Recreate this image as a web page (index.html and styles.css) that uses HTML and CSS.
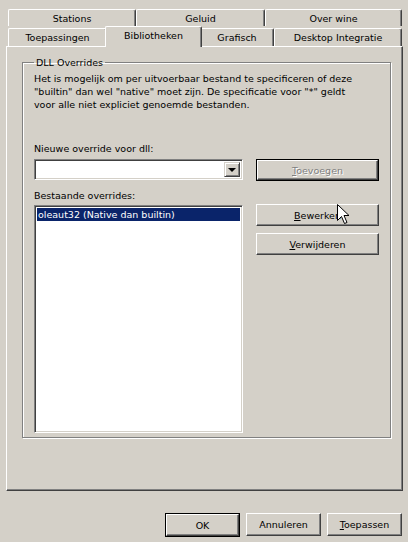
FILE: index.html
```html
<!DOCTYPE html>
<html lang="nl">
<head>
    <meta charset="UTF-8">
    <title>Wine configuratie</title>
    <link rel="stylesheet" href="styles.css">
</head>
<body>
    <div class="dialog">
        <div class="tabs">
            <div class="tab-row tab-row-back">
                <div class="tab w-stations">Stations</div>
                <div class="tab w-geluid">Geluid</div>
                <div class="tab w-wine">Over wine</div>
            </div>
            <div class="tab-row tab-row-front">
                <div class="tab w-toep">Toepassingen</div>
                <div class="tab tab-active w-bib">Bibliotheken</div>
                <div class="tab w-graf">Grafisch</div>
                <div class="tab w-desk">Desktop Integratie</div>
            </div>
        </div>

        <div class="panel">
            <fieldset class="group">
                <legend>DLL Overrides</legend>
                <p class="intro">Het is mogelijk om per uitvoerbaar bestand te specificeren of deze "builtin" dan wel "native" moet zijn. De specificatie voor "*" geldt voor alle niet expliciet genoemde bestanden.</p>

                <div class="overrides">
                    <div class="col-left">
                        <div class="label">Nieuwe override voor dll:</div>
                        <div class="combo">
                            <div class="combo-text"></div>
                            <div class="combo-btn"><span class="arrow"></span></div>
                        </div>
                        <div class="label label-list">Bestaande overrides:</div>
                        <div class="listbox">
                            <div class="list-item selected">oleaut32 (Native dan builtin)</div>
                        </div>
                    </div>
                    <div class="col-right">
                        <button class="btn btn-default btn-disabled"><u>T</u>oevoegen</button>
                        <button class="btn btn-edit"><u>B</u>ewerken</button>
                        <button class="btn btn-del"><u>V</u>erwijderen</button>
                    </div>
                </div>
            </fieldset>
        </div>

        <div class="footer">
            <button class="btn btn-default btn-foot">OK</button>
            <button class="btn btn-foot">Annuleren</button>
            <button class="btn btn-foot"><u>T</u>oepassen</button>
        </div>

        <svg class="cursor" width="13" height="21" viewBox="0 0 13 21">
            <path d="M0.5 0.5 L0.5 16.5 L4.5 12.5 L7.5 19.5 L10 18.5 L7 11.5 L12 11.5 Z" fill="#fff" stroke="#000" stroke-width="1"/>
        </svg>
    </div>
</body>
</html>
```

FILE: styles.css
```css
body {
    margin: 0;
    background-color: #d4d0c8;
    font-family: "DejaVu Sans", Verdana, sans-serif;
    font-size: 9.5px;
    color: #000;
}
.dialog {
    position: relative;
    width: 408px;
    height: 542px;
    padding: 9px 0 0 6px;
    box-sizing: border-box;
}

/* tabs */
.tabs {
    margin-left: 2px;
    width: 394px;
}
.tab-row {
    display: flex;
}
.tab-row-back {
    height: 17px;
    margin-bottom: 1px;
}
.tab-row-front {
    height: 19px;
    align-items: flex-end;
}
.tab {
    box-sizing: border-box;
    height: 17px;
    line-height: 17px;
    text-align: center;
    border-top: 1px solid #fff;
    border-left: 1px solid #fff;
    border-right: 1px solid #404040;
    box-shadow: inset -1px 0 0 #808080;
    border-radius: 2px 2px 0 0;
    background-color: #d4d0c8;
}
.tab-row-front .tab {
    height: 18px;
    line-height: 18px;
}
.tab-row-front .tab-active {
    position: relative;
    z-index: 2;
    height: 21px;
    line-height: 17px;
    margin: 0 -2px -1px;
    padding-bottom: 3px;
}
.w-stations { width: 128px; }
.w-geluid { width: 129px; }
.w-wine { width: 137px; }
.w-toep { width: 99px; }
.w-bib { width: 97px; }
.w-graf { width: 74px; }
.w-desk { width: 128px; }

/* panel */
.panel {
    box-sizing: border-box;
    width: 397px;
    height: 445px;
    border-top: 1px solid #fff;
    border-left: 1px solid #fff;
    border-right: 1px solid #404040;
    border-bottom: 1px solid #404040;
    box-shadow: inset -1px -1px 0 #808080;
    padding: 10px 0 0 15px;
}
.group {
    box-sizing: border-box;
    width: 366px;
    height: 381px;
    margin: 0;
    padding: 0 11px;
    border: 1px solid #808080;
    box-shadow: inset 1px 1px 0 #fff, 1px 1px 0 #fff;
}
.group legend {
    padding: 0 2px;
    line-height: 11px;
}
.intro {
    margin: 4px 0 0;
    line-height: 13px;
    width: 330px;
}

.overrides {
    display: flex;
    gap: 13px;
    margin-top: 31px;
}
.col-left {
    width: 209px;
}
.label {
    line-height: 13px;
    height: 13px;
}
.label-list {
    margin-top: 9px;
}

.combo {
    display: flex;
    box-sizing: border-box;
    height: 21px;
    margin-top: 4px;
    background-color: #fff;
    border-top: 1px solid #808080;
    border-left: 1px solid #808080;
    border-right: 1px solid #fff;
    border-bottom: 1px solid #fff;
    box-shadow: inset 1px 1px 0 #404040, inset -1px -1px 0 #d4d0c8;
    padding: 2px;
}
.combo-text {
    flex: 1;
}
.combo-btn {
    box-sizing: border-box;
    width: 16px;
    height: 15px;
    background-color: #d4d0c8;
    border-top: 1px solid #d4d0c8;
    border-left: 1px solid #d4d0c8;
    border-right: 1px solid #404040;
    border-bottom: 1px solid #404040;
    box-shadow: inset 1px 1px 0 #fff, inset -1px -1px 0 #808080;
    display: flex;
    align-items: center;
    justify-content: center;
}
.arrow {
    width: 0;
    height: 0;
    border-left: 4px solid transparent;
    border-right: 4px solid transparent;
    border-top: 4px solid #000;
    margin-left: -1px;
}

.listbox {
    box-sizing: border-box;
    height: 228px;
    margin-top: 3px;
    background-color: #fff;
    border-top: 1px solid #808080;
    border-left: 1px solid #808080;
    border-right: 1px solid #fff;
    border-bottom: 1px solid #fff;
    box-shadow: inset 1px 1px 0 #404040, inset -1px -1px 0 #d4d0c8;
    padding: 2px 2px 0 2px;
}
.list-item {
    height: 13px;
    line-height: 13px;
    padding-left: 1px;
    white-space: nowrap;
}
.list-item.selected {
    background-color: #0a246a;
    color: #fff;
}

/* buttons */
.col-right {
    display: flex;
    flex-direction: column;
    width: 123px;
    padding-top: 17px;
}
.btn {
    box-sizing: border-box;
    font-family: inherit;
    font-size: 9.5px;
    color: #000;
    background-color: #d4d0c8;
    border-top: 1px solid #fff;
    border-left: 1px solid #fff;
    border-right: 1px solid #404040;
    border-bottom: 1px solid #404040;
    box-shadow: inset -1px -1px 0 #808080;
    border-radius: 0;
    padding: 0;
    height: 22px;
}
.btn-default {
    outline: 1px solid #000;
    outline-offset: 0;
}
.btn-disabled {
    color: #808080;
    text-shadow: 1px 1px 0 #fff;
    height: 20px;
    margin: 1px 1px 0;
    width: 121px;
}
.btn-edit {
    margin-top: 24px;
}
.btn-del {
    margin-top: 7px;
}

.footer {
    display: flex;
    justify-content: flex-end;
    gap: 6px;
    margin-top: 22px;
    padding-right: 6px;
}
.btn-foot {
    width: 75px;
    height: 23px;
}
.footer .btn-default {
    width: 73px;
    height: 22px;
    margin: 1px 1px 0 1px;
}

.cursor {
    position: absolute;
    left: 337px;
    top: 204px;
}
```
